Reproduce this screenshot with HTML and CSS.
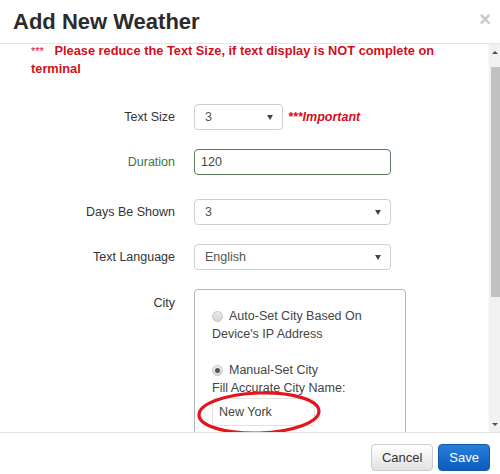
FILE: index.html
```html
<!DOCTYPE html>
<html>
<head>
<meta charset="utf-8">
<link rel="stylesheet" href="styles.css">
</head>
<body>
<div class="modal">
  <div class="modal-header">
    <h4 class="modal-title">Add New Weather</h4>
    <span class="close">×</span>
  </div>
  <div class="modal-main">
    <div class="modal-body">
      <p class="warn"><span class="stars">***</span>&nbsp;&nbsp;&nbsp;Please reduce the Text Size, if text display is NOT complete on terminal</p>
      <div class="form">
        <div class="row row-size">
          <label class="lbl">Text Size</label>
          <div class="ctrl">
            <div class="select select-small"><span>3</span><i class="caret"></i></div>
            <span class="important">***Important</span>
          </div>
        </div>
        <div class="row row-duration">
          <label class="lbl lbl-green">Duration</label>
          <div class="ctrl">
            <div class="input input-green">120</div>
          </div>
        </div>
        <div class="row">
          <label class="lbl">Days Be Shown</label>
          <div class="ctrl">
            <div class="select"><span>3</span><i class="caret"></i></div>
          </div>
        </div>
        <div class="row">
          <label class="lbl">Text Language</label>
          <div class="ctrl">
            <div class="select"><span>English</span><i class="caret"></i></div>
          </div>
        </div>
        <div class="row row-city">
          <label class="lbl lbl-city">City</label>
          <div class="ctrl">
            <div class="city-box">
              <p class="opt"><span class="radio"></span>Auto-Set City Based On Device's IP Address</p>
              <p class="opt opt-manual"><span class="radio checked"></span>Manual-Set City<br>Fill Accurate City Name:</p>
              <div class="city-input">New York</div>
              <p class="opt">&nbsp;</p>
              <svg class="ring" width="130" height="50" viewBox="0 0 130 50">
                <ellipse cx="64" cy="24" rx="60" ry="20" fill="none" stroke="#e3141d" stroke-width="3.2" transform="rotate(-2 64 24)"/>
              </svg>
            </div>
          </div>
        </div>
      </div>
    </div>
    <div class="scrollbar">
      <i class="sb-up"></i>
      <div class="sb-thumb"></div>
      <div class="sb-spacer"></div>
      <i class="sb-down"></i>
    </div>
  </div>
  <div class="modal-footer">
    <button class="btn btn-default">Cancel</button>
    <button class="btn btn-primary">Save</button>
  </div>
</div>
</body>
</html>
```
FILE: styles.css
```css
* { box-sizing: border-box; }
html, body { margin: 0; padding: 0; }
body {
  font-family: "Liberation Sans", Arial, sans-serif;
  background: #fff;
  color: #333;
}
.modal {
  width: 500px;
  height: 474px;
  display: flex;
  flex-direction: column;
  background: #fff;
  overflow: hidden;
}
.modal-header {
  height: 44px;
  flex: none;
  border-bottom: 1px solid #e5e5e5;
  display: flex;
  align-items: center;
  justify-content: space-between;
  padding: 0 9px 0 13px;
}
.modal-title {
  margin: 0;
  font-size: 22px;
  font-weight: bold;
  line-height: 43px;
  color: #2b2b2b;
}
.close {
  font-size: 20px;
  font-weight: bold;
  color: #c8c8c8;
  line-height: 1;
  margin-top: -6px;
}
.modal-main {
  flex: 1;
  min-height: 0;
  display: flex;
}
.modal-body {
  flex: 1;
  overflow: hidden;
  padding: 0 0 0 31px;
}
.warn {
  margin: -2px 0 0 0;
  width: 420px;
  font-size: 12.8px;
  font-weight: bold;
  line-height: 18px;
  color: #d2101c;
}
.stars { font-weight: normal; font-size: 11px; }
.form { margin-top: 26px; margin-left: -31px; }
.row {
  display: flex;
  align-items: center;
  gap: 19px;
  margin-bottom: 19px;
}
.row-duration { margin-bottom: 24px; }
.row-city { align-items: flex-start; }
.lbl {
  width: 175px;
  flex: none;
  text-align: right;
  font-size: 12.5px;
  color: #333;
}
.lbl-green { color: #3c763d; }
.lbl-city { padding-top: 5px; line-height: 18px; }
.ctrl {
  display: flex;
  align-items: center;
  gap: 5px;
}
.select, .input {
  width: 197px;
  height: 26px;
  border: 1px solid #cfcfcf;
  border-radius: 4px;
  display: flex;
  align-items: center;
  justify-content: space-between;
  padding: 0 9px 0 10px;
  font-size: 12.5px;
  color: #555;
  background: #fff;
}
.select-small { width: 89px; }
.caret {
  width: 0;
  height: 0;
  border-left: 3px solid transparent;
  border-right: 3px solid transparent;
  border-top: 5px solid #444;
}
.input-green {
  border-color: #5b7d5b;
  padding-left: 6px;
  color: #444;
}
.important {
  font-size: 12.5px;
  font-weight: bold;
  font-style: italic;
  color: #d2101c;
}
.city-box {
  position: relative;
  width: 212px;
  height: 180px;
  border: 1px solid #b5b5b5;
  border-radius: 4px;
  padding: 17px 17px 0 17px;
  font-size: 12.5px;
  line-height: 18px;
  color: #444;
}
.opt { margin: 0 0 18px 0; }
.opt-manual { margin-bottom: 0; }
.radio {
  display: inline-block;
  width: 11px;
  height: 11px;
  border-radius: 50%;
  border: 1px solid #c4c4c4;
  background: linear-gradient(#eaeaea, #d6d6d6);
  margin-right: 6px;
  vertical-align: -2px;
  position: relative;
}
.radio.checked {
  background: linear-gradient(#f0f0f0, #dadada);
}
.radio.checked::after {
  content: "";
  position: absolute;
  left: 2px;
  top: 2px;
  width: 5px;
  height: 5px;
  border-radius: 50%;
  background: #555;
}
.city-input {
  width: 103px;
  height: 28px;
  margin-top: 1px;
  border: 1px solid #e2e2e2;
  border-radius: 3px;
  padding-left: 6px;
  display: flex;
  align-items: center;
  font-size: 12.5px;
  color: #444;
}
.ring {
  position: absolute;
  left: 0;
  top: 99px;
  pointer-events: none;
}
.scrollbar {
  width: 12px;
  flex: none;
  background: #f1f1f1;
  border-left: 1px solid #fafafa;
  display: flex;
  flex-direction: column;
  align-items: center;
  padding: 7px 0 6px;
}
.sb-up, .sb-down {
  width: 0;
  height: 0;
  border-left: 3px solid transparent;
  border-right: 3px solid transparent;
}
.sb-up { border-bottom: 3px solid #505050; margin-left: 1px; }
.sb-down { border-top: 3px solid #505050; margin-left: 1px; }
.sb-thumb {
  width: 9px;
  height: 230px;
  margin-top: 13px;
  margin-left: 2px;
  background: #c1c1c1;
}
.sb-spacer { flex: 1; }
.modal-footer {
  height: 42px;
  flex: none;
  border-top: 1px solid #e5e5e5;
  display: flex;
  justify-content: flex-end;
  align-items: flex-start;
  gap: 5px;
  padding: 11px 10px 0 0;
}
.btn {
  height: 27px;
  padding: 0 10px;
  font-family: "Liberation Sans", Arial, sans-serif;
  font-size: 13px;
  border-radius: 4px;
  border: 1px solid;
}
.btn-default {
  color: #333;
  border-color: #ccc;
  background: linear-gradient(#fff, #e2e2e2);
}
.btn-primary {
  color: #fff;
  border-color: #1057a8;
  background: linear-gradient(#2a7fdb, #0a5bbd);
  font-weight: normal;
}
```
